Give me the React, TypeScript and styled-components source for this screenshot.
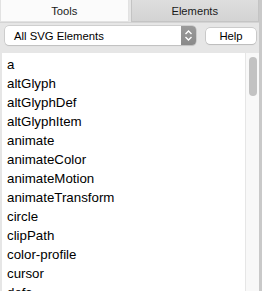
import React from "react";
import styled, { createGlobalStyle } from "styled-components";

const Global = createGlobalStyle`
  html, body { margin: 0; padding: 0; background: #e6e6e6; }
  body { font-family: "Liberation Sans", Arial, sans-serif; font-size: 13px; color: #000; overflow: hidden; }
`;

const Frame = styled.div`
  width: 262px;
  height: 291px;
  display: flex;
  background: #e6e6e6;
  overflow: hidden;
`;

const Main = styled.div`
  flex: 1;
  display: flex;
  flex-direction: column;
  min-width: 0;
`;

const EdgeBar = styled.div`
  width: 3px;
  background: #c9c9c9;
`;

const Tabs = styled.div`
  display: flex;
  gap: 2px;
  height: 22px;
  border-bottom: 1px solid #d4d4d4;
`;

const Tab = styled.div<{ $active?: boolean }>`
  flex: 1;
  display: flex;
  align-items: center;
  justify-content: center;
  padding-top: 1px;
  font-size: 11.2px;
  box-sizing: border-box;
  background: ${(p) => (p.$active ? "#fbfbfb" : "linear-gradient(#dedede, #d3d3d3)")};
  border: 1px solid ${(p) => (p.$active ? "#e2e2e2" : "#c4c4c4")};
  border-top: none;
  color: #1a1a1a;
`;

const Toolbar = styled.div`
  display: flex;
  align-items: flex-start;
  box-sizing: border-box;
  padding: 3px 3px 0 5px;
  height: 30px;
  gap: 10px;
`;

const Select = styled.div`
  flex: 0 0 191px;
  height: 19px;
  display: flex;
  background: #fff;
  border-radius: 4px;
  box-shadow: 0 0 0 0.5px #b8b8b8, 0 1px 1px rgba(0, 0, 0, 0.12);
  overflow: hidden;
`;

const SelectLabel = styled.div`
  flex: 1;
  display: flex;
  align-items: center;
  padding-left: 9px;
  font-size: 11.3px;
`;

const SelectArrow = styled.div`
  width: 15px;
  display: flex;
  align-items: center;
  justify-content: center;
  background: linear-gradient(#9a9a9a, #8a8a8a);
`;

const HelpButton = styled.div`
  margin-top: 2px;
  width: 50px;
  height: 16px;
  display: flex;
  align-items: center;
  justify-content: center;
  background: #fff;
  border-radius: 4px;
  box-shadow: 0 0 0 0.5px #b0b0b0, 0 1px 1px rgba(0, 0, 0, 0.12);
  font-size: 11.3px;
`;

const List = styled.div`
  flex: 1;
  margin-left: 2px;
  background: #fff;
  display: flex;
  min-height: 0;
`;

const Items = styled.div`
  flex: 1;
  padding: 2px 0 0 5px;
  overflow: hidden;
`;

const Item = styled.div`
  height: 19px;
  line-height: 19px;
  font-size: 13.3px;
  white-space: nowrap;
`;

const Track = styled.div`
  width: 14px;
  background: #f8f8f8;
  border-left: 1px solid #e6e6e6;
  display: flex;
  justify-content: center;
  padding-top: 4px;
  box-sizing: border-box;
`;

const Thumb = styled.div`
  width: 8px;
  height: 39px;
  border-radius: 4px;
  background: #c2c2c2;
`;

const items = [
  "a",
  "altGlyph",
  "altGlyphDef",
  "altGlyphItem",
  "animate",
  "animateColor",
  "animateMotion",
  "animateTransform",
  "circle",
  "clipPath",
  "color-profile",
  "cursor",
  "defs",
];

export default function App() {
  return (
    <>
      <Global />
      <Frame>
        <Main>
          <Tabs>
            <Tab $active>Tools</Tab>
            <Tab>Elements</Tab>
          </Tabs>
          <Toolbar>
            <Select>
              <SelectLabel>All SVG Elements</SelectLabel>
              <SelectArrow>
                <svg width="9" height="13" viewBox="0 0 9 13">
                  <path d="M1.5 5 L4.5 2 L7.5 5 M1.5 8 L4.5 11 L7.5 8" fill="none" stroke="#fff" strokeWidth="1.4" />
                </svg>
              </SelectArrow>
            </Select>
            <HelpButton>Help</HelpButton>
          </Toolbar>
          <List>
            <Items>
              {items.map((it) => (
                <Item key={it}>{it}</Item>
              ))}
            </Items>
            <Track>
              <Thumb />
            </Track>
          </List>
        </Main>
        <EdgeBar />
      </Frame>
    </>
  );
}
